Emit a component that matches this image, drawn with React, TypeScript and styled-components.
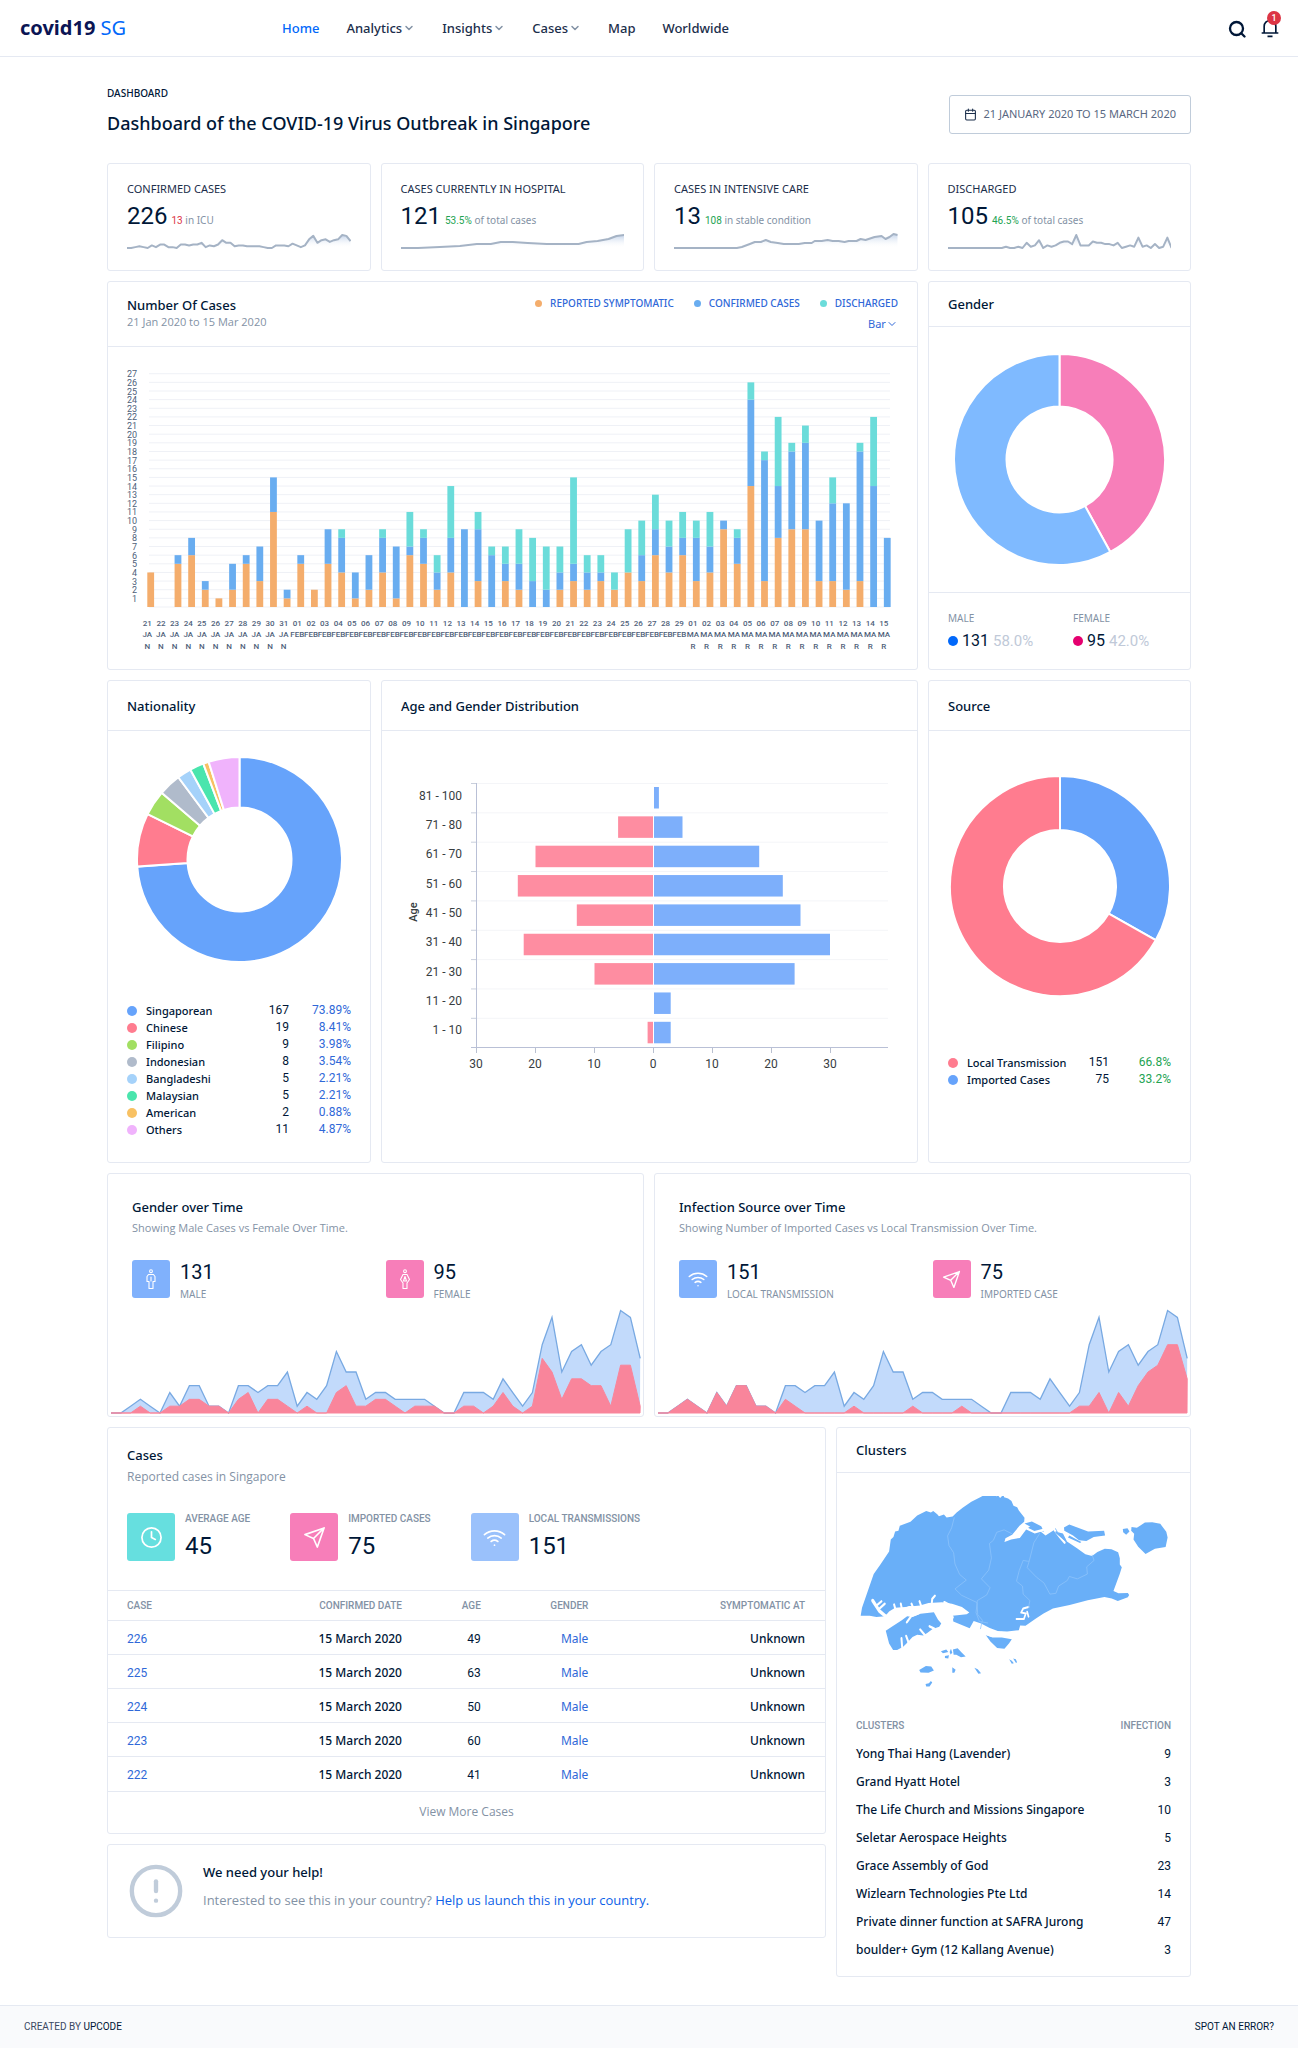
import React from "react";
import styled, { createGlobalStyle } from "styled-components";
import { Calendar, ChevronDown, Clock, CircleAlert } from "lucide-react";

const sans = `"Noto Sans", "Open Sans", sans-serif`;
const soft = `"Open Sans", "Noto Sans", sans-serif`;
const digits = `Roboto, "Noto Sans", sans-serif`;
const ink = "#001737";
const muted = "#8392a5";
const line = "#e5e9f2";
const link = "#2f68d8";

const Global = createGlobalStyle`
  *, *::before, *::after { box-sizing: border-box; }
  body { margin: 0; background: #fff; color: ${ink}; font-family: ${sans}; font-size: 12px; line-height: 16px; }
  h1, h2, p, ul { margin: 0; padding: 0; font-weight: 500; }
  ul { list-style: none; }
  a { text-decoration: none; color: ${link}; }
  button, select { font: inherit; color: inherit; background: none; border: 0; padding: 0; margin: 0; cursor: pointer; }
  svg { display: block; }
`;

/* ---------- page chrome ---------- */

const TopBar = styled.header`
  display: flex;
  align-items: center;
  height: 57px;
  padding: 0 18px 0 20px;
  border-bottom: 1px solid ${line};
`;
const Logo = styled.a`
  flex: 0 0 262px;
  font-size: 20px;
  line-height: 28px;
  font-weight: 700;
  color: #0b1554;
  span { font-weight: 400; color: #0168fa; }
`;
const Nav = styled.nav`
  display: flex;
  gap: 27px;
  flex: 1;
`;
const NavItem = styled.a<{ $active?: boolean }>`
  display: flex;
  align-items: center;
  gap: 1px;
  font-family: ${sans};
  font-size: 13px;
  line-height: 18px;
  font-weight: 500;
  color: ${(p) => (p.$active ? "#0168fa" : "#1b2e4b")};
  svg { color: ${muted}; }
`;
const Tools = styled.div`
  display: flex;
  align-items: center;
  gap: 13px;
`;
const ToolButton = styled.button`
  position: relative;
  display: block;
  color: ${ink};
`;
const Badge = styled.span`
  position: absolute;
  top: -7px;
  right: -1px;
  width: 14px;
  height: 14px;
  border-radius: 50%;
  background: #dc3545;
  color: #fff;
  font: 500 9px/14px ${digits};
  text-align: center;
`;
const Main = styled.main`
  display: flex;
  flex-direction: column;
  gap: 10px;
  padding: 30px 107px 28px;
`;
const PageHead = styled.div`
  display: flex;
  align-items: center;
  justify-content: space-between;
  padding-bottom: 16px;
`;
const Crumb = styled.p`
  font-size: 10px;
  line-height: 12px;
  font-weight: 500;
  text-transform: uppercase;
  margin-bottom: 10px;
`;
const Title = styled.h1`
  font-size: 18px;
  line-height: 28px;
  font-weight: 500;
`;
const DateButton = styled.button`
  display: flex;
  align-items: center;
  gap: 6px;
  height: 39px;
  padding: 0 14px;
  margin-top: 4px;
  border: 1px solid #c0ccda;
  border-radius: 3px;
  font-size: 11px;
  text-transform: uppercase;
  color: #596882;
  svg { color: #1b2e4b; }
`;
const Footer = styled.footer`
  display: flex;
  justify-content: space-between;
  align-items: center;
  height: 43px;
  padding: 0 24px;
  border-top: 1px solid ${line};
  background: #f9fafc;
  font-size: 10px;
  font-family: ${digits};
  text-transform: uppercase;
  color: #3b4863;
  a { color: ${ink}; }
`;

/* ---------- cards ---------- */

const Row = styled.div<{ $cols: string }>`
  display: grid;
  grid-template-columns: ${(p) => p.$cols};
  gap: 10px;
  align-items: stretch;
`;
const Stack = styled.div`
  display: flex;
  flex-direction: column;
  gap: 10px;
`;
const Card = styled.section`
  display: flex;
  flex-direction: column;
  min-width: 0;
  border: 1px solid ${line};
  border-radius: 3px;
  background: #fff;
`;
const CardHead = styled.div<{ $tall?: boolean }>`
  display: flex;
  justify-content: space-between;
  padding: ${(p) => (p.$tall ? "16px 19px 15px" : "13px 19px")};
  border-bottom: 1px solid ${line};
`;
const CardTitle = styled.h2`
  font-size: 13px;
  line-height: 18px;
  font-weight: 500;
`;
const Sub = styled.p<{ $gap?: number; $size?: number }>`
  font-family: ${soft};
  font-size: ${(p) => p.$size || 11}px;
  line-height: 16px;
  font-weight: 400;
  color: ${muted};
  margin-top: ${(p) => p.$gap || 0}px;
`;

const StatCard = styled(Card)`
  padding: 17px 19px 19px;
`;
const StatLabel = styled.h2`
  font-size: 11px;
  line-height: 16px;
  font-weight: 400;
  text-transform: uppercase;
  color: #1b2e4b;
`;
const StatLine = styled.p`
  display: flex;
  align-items: baseline;
  gap: 4px;
  height: 30px;
  margin-top: 4px;
  font-size: 10px;
  line-height: 30px;
  font-weight: 400;
  color: ${muted};
`;
const StatNote = styled.span`
  line-height: 16px;
`;
const Num = styled.span<{ $size: number; $tone?: string }>`
  font-family: ${digits};
  font-size: ${(p) => p.$size}px;
  font-weight: 400;
  color: ${(p) => p.$tone || ink};
`;
const SparkSvg = styled.svg`
  width: 100%;
  height: 20px;
`;

const Legend = styled.ul`
  display: flex;
  gap: 20px;
  font-size: 10px;
  line-height: 12px;
  font-weight: 500;
  text-transform: uppercase;
  color: ${link};
  li { display: flex; align-items: center; gap: 8px; }
`;
const Dot = styled.i<{ $color: string; $size: number }>`
  flex: none;
  width: ${(p) => p.$size}px;
  height: ${(p) => p.$size}px;
  border-radius: 50%;
  background: ${(p) => p.$color};
`;
const ChartControls = styled.div`
  display: flex;
  flex-direction: column;
  align-items: flex-end;
  gap: 8px;
  padding-top: 1px;
`;
const TypePicker = styled.label`
  display: flex;
  align-items: center;
  font-size: 11px;
  line-height: 14px;
  color: ${link};
  select { appearance: none; outline: 0; }
`;
const NumberHead = styled(CardHead)`
  padding: 14px 19px 15px;
`;
const FluidSvg = styled.svg`
  width: 100%;
  height: auto;
`;
const DonutBox = styled.div<{ $top: number; $bottom: number }>`
  display: flex;
  justify-content: center;
  padding: ${(p) => p.$top}px 0 ${(p) => p.$bottom}px;
`;
const GenderFoot = styled.div`
  display: grid;
  grid-template-columns: 1fr 1fr;
  gap: 8px;
  padding: 19px 0 16px 19px;
  border-top: 1px solid ${line};
  flex: 1;
`;
const SmallCaps = styled.p<{ $bold?: boolean }>`
  font-family: ${(p) => (p.$bold ? digits : sans)};
  font-size: 10px;
  line-height: 12px;
  font-weight: ${(p) => (p.$bold ? 500 : 400)};
  text-transform: uppercase;
  color: ${muted};
`;
const GenderValue = styled.p`
  display: flex;
  align-items: center;
  gap: 4px;
  margin-top: 8px;
  line-height: 18px;
`;
const KeyTable = styled.table`
  width: 100%;
  border-collapse: collapse;
  td, th { height: 17px; padding: 0; line-height: 17px; font-weight: 500; text-align: right; }
  th { text-align: left; font-size: 11px; padding-left: 9px; }
  td:first-child { width: 10px; }
  td:nth-child(3) { font: 400 12px/17px ${digits}; }
  td:last-child { width: 62px; font: 400 12px/17px ${digits}; }
`;
const KeyWrap = styled.div<{ $tone: string }>`
  padding: 0 19px 24px;
  td:last-child { color: ${(p) => p.$tone}; }
`;

/* ---------- trend cards and case summary ---------- */

const TrendBody = styled.div`
  padding: 24px 24px 0;
`;
const TrendStats = styled.div`
  display: grid;
  grid-template-columns: 1fr 1fr;
  gap: 20px;
  margin-top: 24px;
`;
const Media = styled.div`
  display: flex;
  gap: 10px;
`;
const Tile = styled.div<{ $color: string; $size: number }>`
  display: flex;
  align-items: center;
  justify-content: center;
  flex: none;
  width: ${(p) => p.$size}px;
  height: ${(p) => p.$size}px;
  border-radius: 3px;
  background: ${(p) => p.$color};
  color: #fff;
`;
const MediaText = styled.div<{ $line: number }>`
  display: flex;
  flex-direction: column;
  gap: 4px;
  ${Num} { line-height: ${(p) => p.$line}px; }
`;
const AreaBox = styled.div`
  padding: 7px 2px 1px 3px;
`;
const CasesHead = styled.div`
  padding: 18px 19px 27px;
`;
const CaseStats = styled.div`
  display: flex;
  gap: 40px;
  margin-top: 28px;
`;
const CaseTable = styled.table`
  width: 100%;
  border-collapse: collapse;
  font-weight: 500;
  th, td { padding: 0; text-align: right; border-top: 1px solid ${line}; }
  th { height: 30px; font: 500 10px/12px ${digits}; text-transform: uppercase; color: ${muted}; }
  td { height: 34px; font-size: 12px; line-height: 16px; padding-top: 2px; }
  th:first-child, td:first-child { text-align: left; padding-left: 19px; }
  th:last-child, td:last-child { padding-right: 20px; }
  td a { font-weight: 400; }
`;
const NumCell = styled.td`
  && { font-family: ${digits}; font-weight: 400; }
`;
const MoreButton = styled.button`
  height: 42px;
  border-top: 1px solid ${line};
  font-family: ${soft};
  font-size: 12px;
  color: ${muted};
`;
const HelpCard = styled(Card)`
  flex-direction: row;
  align-items: center;
  gap: 18px;
  padding: 17px 19px;
  svg { color: #c0ccda; }
`;
const HelpText = styled.div`
  padding-bottom: 9px;
  p { font-family: ${soft}; font-size: 13px; line-height: 18px; font-weight: 400; color: ${muted}; margin-top: 10px; }
  a { color: #0d5fe8; }
`;
const ClusterBody = styled.div`
  padding: 23px 19px 11px;
`;
const ClusterTable = styled.table`
  width: 100%;
  border-collapse: collapse;
  margin-top: 22px;
  th, td { padding: 0; text-align: right; }
  th { height: 30px; font: 500 10px/12px ${digits}; text-transform: uppercase; color: ${muted}; }
  td { height: 28px; font-size: 12px; line-height: 16px; padding-bottom: 2px; }
  th:first-child, td:first-child { text-align: left; font-weight: 500; }
  td:last-child { font-family: ${digits}; }
`;

/* ---------- data ---------- */

const cases: number[][] = [
  [4,0,0],[0,0,0],[5,1,0],[6,2,0],[2,1,0],[1,0,0],[2,3,0],[5,1,0],[3,4,0],[11,4,0],[1,1,0],
  [5,1,0],[2,0,0],[5,4,0],[4,4,1],[1,3,0],[2,4,0],[4,4,1],[1,6,0],[6,1,4],[5,3,1],[2,2,2],[4,4,6],[0,9,0],[3,6,2],[0,6,1],[3,2,2],[2,3,4],[0,3,5],[0,2,5],[2,2,3],[3,2,10],[2,2,2],[3,1,2],[2,0,2],[4,0,5],[3,3,4],[6,3,4],[4,3,3],[6,2,3],
  [3,5,2],[4,3,4],[9,1,0],[5,3,1],[14,10,2],[3,14,1],[8,6,8],[9,9,1],[9,10,2],[3,7,0],[3,9,3],[2,10,0],[3,15,1],[0,14,8],[0,8,0],
];
const confirmed = [0,0,1,2,1,0,3,1,4,4,1,1,0,4,4,3,4,4,6,1,3,2,4,9,6,6,2,3,3,2,2,2,2,1,0,0,3,3,3,2,5,3,1,3,10,14,6,9,10,7,9,10,15,14,8];
const female = [0,0,0,1,0,0,1,1,2,2,1,1,0,2,3,0,2,2,1,0,1,0,0,3,4,1,1,2,2,1,0,1,1,1,0,0,1,1,0,1,3,1,0,1,8,6,2,5,5,4,4,1,7,7,1];
const imported = [0,0,1,2,1,0,3,1,4,4,1,1,0,2,1,0,0,0,0,0,1,0,0,0,0,0,1,0,0,0,0,1,0,0,0,0,0,0,0,0,0,0,0,1,1,3,0,3,1,4,6,7,10,10,5];

const series = (v: number[], max: number): number[][] =>
  v.map((n, i) => [(i * 224) / (v.length - 1), 17 - (n * 13) / max]);
const hospital = [[0,17],[17,17],[39,16],[59,15],[76,13],[90,13],[100,11],[112,11],[127,12],[146,13],[163,13],[178,13],[186,11],[197,10],[208,8],[216,5],[224,4]];
const intensive = [[0,17],[63,17],[68,16],[76,13],[81,11],[87,11],[92,9],[97,11],[104,12],[110,13],[125,13],[131,12],[138,12],[141,10],[148,10],[154,9],[159,10],[165,10],[171,11],[175,10],[183,10],[187,8],[192,9],[201,6],[208,5],[212,8],[216,6],[220,3],[224,4]];

const nations: [string, number, string, string][] = [
  ["Singaporean", 167, "73.89%", "#66a3fb"], ["Chinese", 19, "8.41%", "#ff7c8f"],
  ["Filipino", 9, "3.98%", "#a2df62"], ["Indonesian", 8, "3.54%", "#b0bbcb"],
  ["Bangladeshi", 5, "2.21%", "#a5d2fa"], ["Malaysian", 5, "2.21%", "#4ae5ad"],
  ["American", 2, "0.88%", "#f8c163"], ["Others", 11, "4.87%", "#f0b3fc"],
];
const sources: [string, number, string, string][] = [
  ["Local Transmission", 151, "66.8%", "#ff7c8f"], ["Imported Cases", 75, "33.2%", "#66a3fb"],
];
const ages: [string, number, number][] = [
  ["81 - 100", 0, 1], ["71 - 80", 6, 5], ["61 - 70", 20, 18], ["51 - 60", 23, 22], ["41 - 50", 13, 25],
  ["31 - 40", 22, 30], ["21 - 30", 10, 24], ["11 - 20", 0, 3], ["1 - 10", 1, 3],
];
const clusters: [string, number][] = [
  ["Yong Thai Hang (Lavender)", 9], ["Grand Hyatt Hotel", 3], ["The Life Church and Missions Singapore", 10],
  ["Seletar Aerospace Heights", 5], ["Grace Assembly of God", 23], ["Wizlearn Technologies Pte Ltd", 14],
  ["Private dinner function at SAFRA Jurong", 47], ["boulder+ Gym (12 Kallang Avenue)", 3],
];
const latest: [number, number][] = [[226, 49], [225, 63], [224, 50], [223, 60], [222, 41]];

/* ---------- drawings ---------- */

const pts = (p: number[][]) => p.map((q) => q.join(",")).join(" ");

function Spark({ points, id }: { points: number[][]; id: string }) {
  return (
    <SparkSvg viewBox="0 0 224 20" preserveAspectRatio="none" aria-hidden="true">
      <defs>
        <linearGradient id={id} x1="0" y1="0" x2="0" y2="1">
          <stop offset="0" stopColor="#c3d3ea" />
          <stop offset="1" stopColor="#fff" stopOpacity="0" />
        </linearGradient>
      </defs>
      <polygon points={`0,17 ${pts(points)} 224,17`} fill={`url(#${id})`} />
      <polyline points={pts(points)} fill="none" stroke="#a5b3c5" strokeWidth="2" strokeLinejoin="round" />
    </SparkSvg>
  );
}

function Donut({ size, hole, slices, label }: { size: number; hole: number; slices: [number, string][]; label: string }) {
  const c = size / 2;
  const total = slices.reduce((s, [v]) => s + v, 0);
  let from = 0;
  const at = (f: number, r: number) =>
    `${c + r * Math.sin(f * 2 * Math.PI)} ${c - r * Math.cos(f * 2 * Math.PI)}`;
  return (
    <svg width={size} height={size} role="img" aria-label={label}>
      {slices.map(([v, color]) => {
        const a = from / total;
        from += v;
        const b = from / total;
        const big = b - a > 0.5 ? 1 : 0;
        return (
          <path
            key={color}
            fill={color}
            stroke="#fff"
            strokeWidth="2"
            d={`M${at(a, c)} A${c} ${c} 0 ${big} 1 ${at(b, c)} L${at(b, hole)} A${hole} ${hole} 0 ${big} 0 ${at(a, hole)} Z`}
          />
        );
      })}
    </svg>
  );
}

function CaseChart() {
  const base = 260;
  const unit = 8.64;
  return (
    <FluidSvg viewBox="0 0 809 322" role="img" aria-label="Number of cases by day">
      <g stroke="#eff1f6">
        {Array.from({ length: 28 }, (_, i) => (
          <line key={i} x1="41" x2="782" y1={base - i * unit} y2={base - i * unit} />
        ))}
      </g>
      <g fontFamily="Roboto, sans-serif" fontSize="9" fill="#4f5f7a" textAnchor="end">
        {Array.from({ length: 27 }, (_, i) => (
          <text key={i} x="29" y={base - (i + 1) * unit + 3.5}>{i + 1}</text>
        ))}
      </g>
      {cases.map(([a, b, c], i) => {
        const x = 39.3 + i * 13.64;
        const day = i < 11 ? 21 + i : i < 40 ? i - 10 : i - 39;
        const month = i < 11 ? ["JA", "N"] : i < 40 ? ["FEB"] : ["MA", "R"];
        return (
          <g key={i}>
            <rect x={x} width="6.8" y={base - a * unit} height={a * unit} fill="#f4ad6c" />
            <rect x={x} width="6.8" y={base - (a + b) * unit} height={b * unit} fill="#69adf0" />
            <rect x={x} width="6.8" y={base - (a + b + c) * unit} height={c * unit} fill="#6bdcda" />
            <g fontFamily="Roboto, sans-serif" fontSize="8" fontWeight="500" fill="#4f5f7a" textAnchor="middle">
              <text x={x} y="279">{String(day).padStart(2, "0")}</text>
              {month.map((m, k) => (
                <text key={k} x={x} y={290 + k * 12}>{m}</text>
              ))}
            </g>
          </g>
        );
      })}
    </FluidSvg>
  );
}

function AgeChart() {
  const top = 52.5;
  const step = 29.35;
  const zero = 271.5;
  const unit = 5.9;
  return (
    <FluidSvg viewBox="0 0 535 370" role="img" aria-label="Age and gender distribution">
      <g fontFamily="Roboto, sans-serif" fontSize="12" fill="#373d3f">
        {ages.map(([label, l, r], i) => {
          const y = top + i * step;
          return (
            <g key={label}>
              <line x1="95" x2="506" y1={y} y2={y} stroke="#f4f5f8" />
              <line x1="89" x2="95" y1={y} y2={y} stroke="#c9cfdc" />
              <text x="80" y={y + 16} textAnchor="end">{label}</text>
              {l > 0 && <rect x={zero - l * unit} width={l * unit - 0.5} y={y + 3.5} height="21.5" fill="#fe8da1" />}
              <rect x={zero + 0.5} width={r * unit - 1} y={y + 3.5} height="21.5" fill="#7daffb" />
            </g>
          );
        })}
        {[30, 20, 10, 0, 10, 20, 30].map((n, i) => (
          <g key={i}>
            <line x1={94.5 + i * 59} x2={94.5 + i * 59} y1="317" y2="322" stroke="#b9c0d0" />
            <text x={94 + i * 59} y="337" textAnchor="middle">{n}</text>
          </g>
        ))}
        <text transform="translate(35 181) rotate(-90)" textAnchor="middle" fontWeight="500" fontSize="11">Age</text>
      </g>
      <path d="M94.5 52V316.5H506M89 316.5h6" fill="none" stroke="#b9c0d6" />
    </FluidSvg>
  );
}

function AreaChart({ front, label }: { front: number[]; label: string }) {
  const path = (v: number[]) => v.map((n, i) => [i * 9.8, 106 - n * 6.83]);
  return (
    <FluidSvg viewBox="0 0 530 108" role="img" aria-label={label}>
      <polygon points={`0,106 ${pts(path(confirmed))} 529,106`} fill="#c2dafb" />
      <polyline points={pts(path(confirmed))} fill="none" stroke="#78a9e2" strokeWidth="1.3" />
      <polygon points={`0,106 ${pts(path(front))} 529,106`} fill="#f9859b" stroke="#f9859b" />
    </FluidSvg>
  );
}

function SingaporeMap() {
  return (
    <FluidSvg viewBox="26 76 314 192" role="img" aria-label="Map of clusters in Singapore">
      <g transform="scale(.3333 .4005)" fill="#69aff8">
        <path d="M92 488l4-20 29-70 6-14 20-24 26-32 5-30 8-6 5-14 10-2 4-12 32-10 20-16 27-11 14 4 7-4 12 8 5 5 15-4 8 7 18-2 12-10 18-12 26-15 28-12 22-9 20 0 4 8 5-4 7 8 10-9 2 7 12 3 10 6 6 12 11 4 5 8 17 18-1 10-14 10-12 12-10 10-20 9-3 9 20-6 26-4 20-22 14-8 25 12 18 12 22-12 8-6 7 10 15 3 12 20 30 17 25 15 20 4 16-10 22-8 20 1 20 8 5 15 0 15 6 7-6 16-19 43 15 6 28-1 4 5-4 6-30 9-18-6-22-4-50 8-54 12-50 9-28 12-24 13-30 18-16-1-4 12-35 3-28-1-24-8-26-11-22-6-12 18-49-17-2-14 42-4 8-4-22-14-30-8-30-4-40 2-26 6-44 4-30 2-18 9-12 12-26 2-20-3z" />
        <path d="M167 525l18-10 30-16 16-10 16 2 24-8 40-4 12 18 10 10-6 8-20 6-16 10-12 6-18-2-14 6-18 16-10 8-18 8-12 0-12-16z" />
        <path d="M466 536l20 6 28 0 30 4-8 10-14 14-22-2-20-16z" />
        <path d="M700 268l16-7 26 8 30 9 48-2 3 12-34 4-22 10-22-2-18-12-26-12z" />
        <path d="M902 267l16 2 24-13 22-1 24 4 18 20 4 14-6 24-32 4-28 13-22-18-14-18 2-14-9-8z" />
        <path d="M876 272l14-2 6 8-10 8-9-6zM582 258l22-5 28 12 8 14-26-6zM267 623l20-10 16 1 8 10-16 6-24-1zM286 658l10-2 6-6 4 4-8 10-10 0zM332 576l16-4 6 6-16 3zM344 588l12-2-2 8-10-1zM358 578l4-8 4 10-5 4zM368 572l14-3 12 10 12 10-14 2-14-6-8 0zM366 616l10 6-4 8-6 0zM432 617l10 4 10 10-8 1zM536 596l8 4 6 6-6 1zM548 594l8 2 4 8-4 1z" />
        <g fill="none" stroke="#fff" strokeLinecap="round" strokeLinejoin="round">
          <path strokeWidth="9" d="M128 450l20 26 20 14 30-8 40-14 40 4 40 0 34 8 14 12" />
          <path strokeWidth="6" d="M140 462l14-10M148 470l16-12M196 472l-4-12M216 474l-4-16M250 470l-6-12M274 466l-6-14M304 462l2-16 8-8M342 454l14 6 10 16M230 504l14-16 20-6M216 566l-2-22M236 556l-8-18M284 536l-14-14M312 520l-14-6" />
          <path strokeWidth="5" d="M456 530l28 8 30-8 28 8M594 466l-16 4-6 10 14 2-6 14-22 0M590 478l4 12" />
          <path strokeWidth="6" d="M582 268l30 12 26-6M668 270l20 22 14 14" />
        </g>
        <path fill="#69aff8" d="M566 232l10 8-2 4-10-8zM676 276l28 20-2 5-28-20zM716 288l36 16-4 3-36-14z" />
        <g fill="none" stroke="#8fc5fb" strokeWidth="2">
          <path d="M372 243l-8 26-12 20 4 24 14 18 4 28 14 26 20 14-34 22 20 16 46 18 2 30 14 14-6 22" />
          <path d="M545 284l-24-10-22 6-10 20-12 8 6 36-8 30-22 22 26 22-10 18-28 14-4 30 10 22 26 4" />
          <path d="M628 282l-18 24-14 46-6 0-12-2-12 26-8 26 18 12 2 20 20 16-4 18" />
          <path d="M596 352l-6 16 28 24 22 14 18 28 18-2 8-18 26-14 6-10 24 6 30-12-2-18 22-16-6-14" />
        </g>
      </g>
    </FluidSvg>
  );
}

const stroke = { fill: "none", stroke: "currentColor", strokeLinecap: "round", strokeLinejoin: "round" } as const;

const WifiIcon = ({ size }: { size: number }) => (
  <svg width={size} height={size} viewBox="0 0 24 24" strokeWidth="1.8" {...stroke}>
    <path d="M5 12.6a11 11 0 0 1 14 0M1.5 9a16 16 0 0 1 21 0M8.5 16.1a6 6 0 0 1 7 0M12 20h.01" />
  </svg>
);
const SendIcon = ({ size }: { size: number }) => (
  <svg width={size} height={size} viewBox="0 0 24 24" strokeWidth="1.7" {...stroke}>
    <path d="M22 2 11 13M22 2l-7 20-4-9-9-4 20-7z" />
  </svg>
);
const PersonIcon = ({ woman }: { woman?: boolean }) => (
  <svg width="20" height="20" viewBox="0 0 20 20" strokeWidth="1.1" {...stroke}>
    <circle cx="10" cy="2.2" r="1.4" />
    {woman ? (
      <path d="M8 5.5h4l2.5 5-2.5 3.5v5.5h-4v-5.5l-2.5-3.5zM10 7.5l-1.5 4.5h3z" />
    ) : (
      <path d="M7.5 5.5h5l1.5 2v5h-2v7h-4v-7h-2v-5zM10 8v4" />
    )}
  </svg>
);

/* ---------- repeated parts ---------- */

function Stat(p: { label: string; value: number; accent: string; tone: string; note: string; points: number[][]; id: string }) {
  return (
    <StatCard>
      <StatLabel>{p.label}</StatLabel>
      <StatLine>
        <Num $size={24}>{p.value}</Num>
        <StatNote><Num $size={10} $tone={p.tone}>{p.accent}</Num> {p.note}</StatNote>
      </StatLine>
      <Spark points={p.points} id={p.id} />
    </StatCard>
  );
}

function KeyList({ rows, tone }: { rows: [string, number, string, string][]; tone: string }) {
  return (
    <KeyWrap $tone={tone}>
      <KeyTable>
        <tbody>
          {rows.map(([name, n, pct, color]) => (
            <tr key={name}>
              <td><Dot as="div" $color={color} $size={10} /></td>
              <th scope="row">{name}</th>
              <td>{n}</td>
              <td>{pct}</td>
            </tr>
          ))}
        </tbody>
      </KeyTable>
    </KeyWrap>
  );
}

function TrendStat({ color, icon, value, label }: { color: string; icon: React.ReactNode; value: number; label: string }) {
  return (
    <Media>
      <Tile $color={color} $size={38}>{icon}</Tile>
      <MediaText $line={24}>
        <Num $size={20}>{value}</Num>
        <SmallCaps>{label}</SmallCaps>
      </MediaText>
    </Media>
  );
}

function CaseStat({ color, icon, value, label }: { color: string; icon: React.ReactNode; value: number; label: string }) {
  return (
    <Media>
      <Tile $color={color} $size={48}>{icon}</Tile>
      <MediaText $line={34}>
        <SmallCaps $bold>{label}</SmallCaps>
        <Num $size={24}>{value}</Num>
      </MediaText>
    </Media>
  );
}

export default function App() {
  return (
    <>
      <Global />
      <TopBar>
        <Logo href="#">covid19 <span>SG</span></Logo>
        <Nav>
          <NavItem href="#" $active>Home</NavItem>
          {["Analytics", "Insights", "Cases"].map((n) => (
            <NavItem as="button" key={n}>{n}<ChevronDown size={12} strokeWidth={3} /></NavItem>
          ))}
          <NavItem href="#">Map</NavItem>
          <NavItem href="#">Worldwide</NavItem>
        </Nav>
        <Tools>
          <ToolButton aria-label="Search">
            <svg width="20" height="20" viewBox="0 0 20 20" strokeWidth="2.3" {...stroke}>
              <circle cx="9.5" cy="10.5" r="6.5" /><path d="m14.5 15.5 3 3" />
            </svg>
          </ToolButton>
          <ToolButton aria-label="Notifications">
            <svg width="20" height="20" viewBox="0 0 24 24" fill="currentColor">
              <path d="M20 17h2v2H2v-2h2v-7a8 8 0 1 1 16 0v7zm-2 0v-7a6 6 0 1 0-12 0v7h12zm-9 4h6v2H9v-2z" />
            </svg>
            <Badge>1</Badge>
          </ToolButton>
        </Tools>
      </TopBar>

      <Main>
        <PageHead>
          <div>
            <Crumb>Dashboard</Crumb>
            <Title>Dashboard of the COVID-19 Virus Outbreak in Singapore</Title>
          </div>
          <DateButton><Calendar size={13} />21 January 2020 to 15 March 2020</DateButton>
        </PageHead>

        <Row $cols="repeat(4, minmax(0, 1fr))">
          <Stat id="s1" label="Confirmed Cases" value={226} accent="13" tone="#dc3545" note="in ICU" points={series(confirmed, 15)} />
          <Stat id="s2" label="Cases Currently in Hospital" value={121} accent="53.5%" tone="#22a352" note="of total cases" points={hospital} />
          <Stat id="s3" label="Cases in Intensive Care" value={13} accent="108" tone="#22a352" note="in stable condition" points={intensive} />
          <Stat id="s4" label="Discharged" value={105} accent="46.5%" tone="#22a352" note="of total cases" points={series(cases.map((c) => c[2]), 10)} />
        </Row>

        <Row $cols="minmax(0, 811fr) minmax(0, 263fr)">
          <Card>
            <NumberHead>
              <div>
                <CardTitle>Number Of Cases</CardTitle>
                <Sub>21 Jan 2020 to 15 Mar 2020</Sub>
              </div>
              <ChartControls>
                <Legend>
                  <li><Dot $color="#f4ad6c" $size={7} />Reported Symptomatic</li>
                  <li><Dot $color="#69adf0" $size={7} />Confirmed Cases</li>
                  <li><Dot $color="#6bdcda" $size={7} />Discharged</li>
                </Legend>
                <TypePicker>
                  <select aria-label="Chart type"><option>Bar</option></select>
                  <ChevronDown size={12} />
                </TypePicker>
              </ChartControls>
            </NumberHead>
            <CaseChart />
          </Card>
          <Card>
            <CardHead><CardTitle>Gender</CardTitle></CardHead>
            <DonutBox $top={27} $bottom={27}>
              <Donut size={211} hole={53} label="Cases by gender" slices={[[42, "#f77eb9"], [58, "#7fbaff"]]} />
            </DonutBox>
            <GenderFoot>
              <div>
                <SmallCaps>Male</SmallCaps>
                <GenderValue><Dot $color="#0168fa" $size={10} /><Num $size={16}>131</Num><Num $size={15} $tone="#c0c9d8">58.0%</Num></GenderValue>
              </div>
              <div>
                <SmallCaps>Female</SmallCaps>
                <GenderValue><Dot $color="#e5006f" $size={10} /><Num $size={16}>95</Num><Num $size={15} $tone="#c0c9d8">42.0%</Num></GenderValue>
              </div>
            </GenderFoot>
          </Card>
        </Row>

        <Row $cols="minmax(0, 264fr) minmax(0, 537fr) minmax(0, 263fr)">
          <Card>
            <CardHead $tall><CardTitle>Nationality</CardTitle></CardHead>
            <DonutBox $top={26} $bottom={40}>
              <Donut size={205} hole={52} label="Cases by nationality" slices={nations.map((n) => [n[1], n[3]])} />
            </DonutBox>
            <KeyList rows={nations} tone={link} />
          </Card>
          <Card>
            <CardHead $tall><CardTitle>Age and Gender Distribution</CardTitle></CardHead>
            <AgeChart />
          </Card>
          <Card>
            <CardHead $tall><CardTitle>Source</CardTitle></CardHead>
            <DonutBox $top={45} $bottom={58}>
              <Donut size={220} hole={56} label="Cases by source" slices={[[33.2, "#66a3fb"], [66.8, "#ff7c8f"]]} />
            </DonutBox>
            <KeyList rows={sources} tone="#22a352" />
          </Card>
        </Row>

        <Row $cols="repeat(2, minmax(0, 1fr))">
          <Card>
            <TrendBody>
              <CardTitle>Gender over Time</CardTitle>
              <Sub $gap={4}>Showing Male Cases vs Female Over Time.</Sub>
              <TrendStats>
                <TrendStat color="#80b1fc" icon={<PersonIcon />} value={131} label="Male" />
                <TrendStat color="#f77eb9" icon={<PersonIcon woman />} value={95} label="Female" />
              </TrendStats>
            </TrendBody>
            <AreaBox><AreaChart front={female} label="Male and female cases over time" /></AreaBox>
          </Card>
          <Card>
            <TrendBody>
              <CardTitle>Infection Source over Time</CardTitle>
              <Sub $gap={4}>Showing Number of Imported Cases vs Local Transmission Over Time.</Sub>
              <TrendStats>
                <TrendStat color="#80b1fc" icon={<WifiIcon size={20} />} value={151} label="Local Transmission" />
                <TrendStat color="#f77eb9" icon={<SendIcon size={19} />} value={75} label="Imported Case" />
              </TrendStats>
            </TrendBody>
            <AreaBox><AreaChart front={imported} label="Imported and local cases over time" /></AreaBox>
          </Card>
        </Row>

        <Row $cols="minmax(0, 719fr) minmax(0, 355fr)">
          <Stack>
            <Card>
              <CasesHead>
                <CardTitle>Cases</CardTitle>
                <Sub $gap={5} $size={12}>Reported cases in Singapore</Sub>
                <CaseStats>
                  <CaseStat color="#66dfdf" icon={<Clock size={23} strokeWidth={1.8} />} value={45} label="Average Age" />
                  <CaseStat color="#f77eb9" icon={<SendIcon size={23} />} value={75} label="Imported Cases" />
                  <CaseStat color="#9ac1fb" icon={<WifiIcon size={23} />} value={151} label="Local Transmissions" />
                </CaseStats>
              </CasesHead>
              <CaseTable>
                <colgroup>
                  <col /><col width="26%" /><col width="11%" /><col width="15%" /><col width="33%" />
                </colgroup>
                <thead>
                  <tr><th>Case</th><th>Confirmed Date</th><th>Age</th><th>Gender</th><th>Symptomatic At</th></tr>
                </thead>
                <tbody>
                  {latest.map(([id, age]) => (
                    <tr key={id}>
                      <NumCell><a href="#">{id}</a></NumCell>
                      <td>15 March 2020</td>
                      <NumCell>{age}</NumCell>
                      <td><a href="#">Male</a></td>
                      <td>Unknown</td>
                    </tr>
                  ))}
                </tbody>
              </CaseTable>
              <MoreButton>View More Cases</MoreButton>
            </Card>
            <HelpCard>
              <CircleAlert size={58} strokeWidth={1.8} />
              <HelpText>
                <CardTitle>We need your help!</CardTitle>
                <p>Interested to see this in your country? <a href="#">Help us launch this in your country.</a></p>
              </HelpText>
            </HelpCard>
          </Stack>
          <Card>
            <CardHead><CardTitle>Clusters</CardTitle></CardHead>
            <ClusterBody>
              <SingaporeMap />
              <ClusterTable>
                <thead><tr><th>Clusters</th><th>Infection</th></tr></thead>
                <tbody>
                  {clusters.map(([name, n]) => (
                    <tr key={name}><td>{name}</td><td>{n}</td></tr>
                  ))}
                </tbody>
              </ClusterTable>
            </ClusterBody>
          </Card>
        </Row>
      </Main>

      <Footer>
        <span>Created by <a href="#">Upcode</a></span>
        <a href="#">Spot an error?</a>
      </Footer>
    </>
  );
}
